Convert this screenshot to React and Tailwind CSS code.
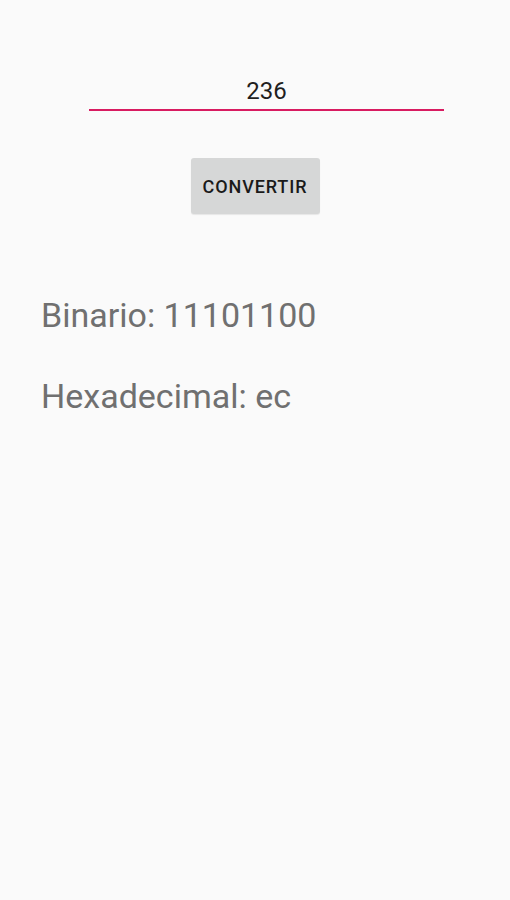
export default function App() {
  const decimal = '236'
  const binary = Number(decimal).toString(2)
  const hex = Number(decimal).toString(16)

  return (
    <div className="min-h-screen bg-[#fafafa] font-['Roboto','Liberation_Sans',sans-serif]">
      {/* number input */}
      <div className="ml-[89px] w-[355px] pt-[77px]">
        <div className="border-b-2 border-[#d81b60] pb-[4px] text-center text-[24px] leading-[28px] text-[#1f1f1f]">
          {decimal}
        </div>
      </div>

      <div className="mt-[47px] flex justify-center">
        <button className="flex h-[56px] w-[129px] items-center justify-center rounded-[3px] bg-[#d6d7d7] text-[18px] font-medium tracking-[0.05em] text-[#1a1a1a] shadow-[0_1px_1px_rgba(0,0,0,0.08)]">
          CONVERTIR
        </button>
      </div>

      <div className="mt-[81px] flex flex-col gap-[41px] pl-[41px] text-[34px] leading-[40px] text-[#707070]">
        <p>Binario: {binary}</p>
        <p>Hexadecimal: {hex}</p>
      </div>
    </div>
  )
}
